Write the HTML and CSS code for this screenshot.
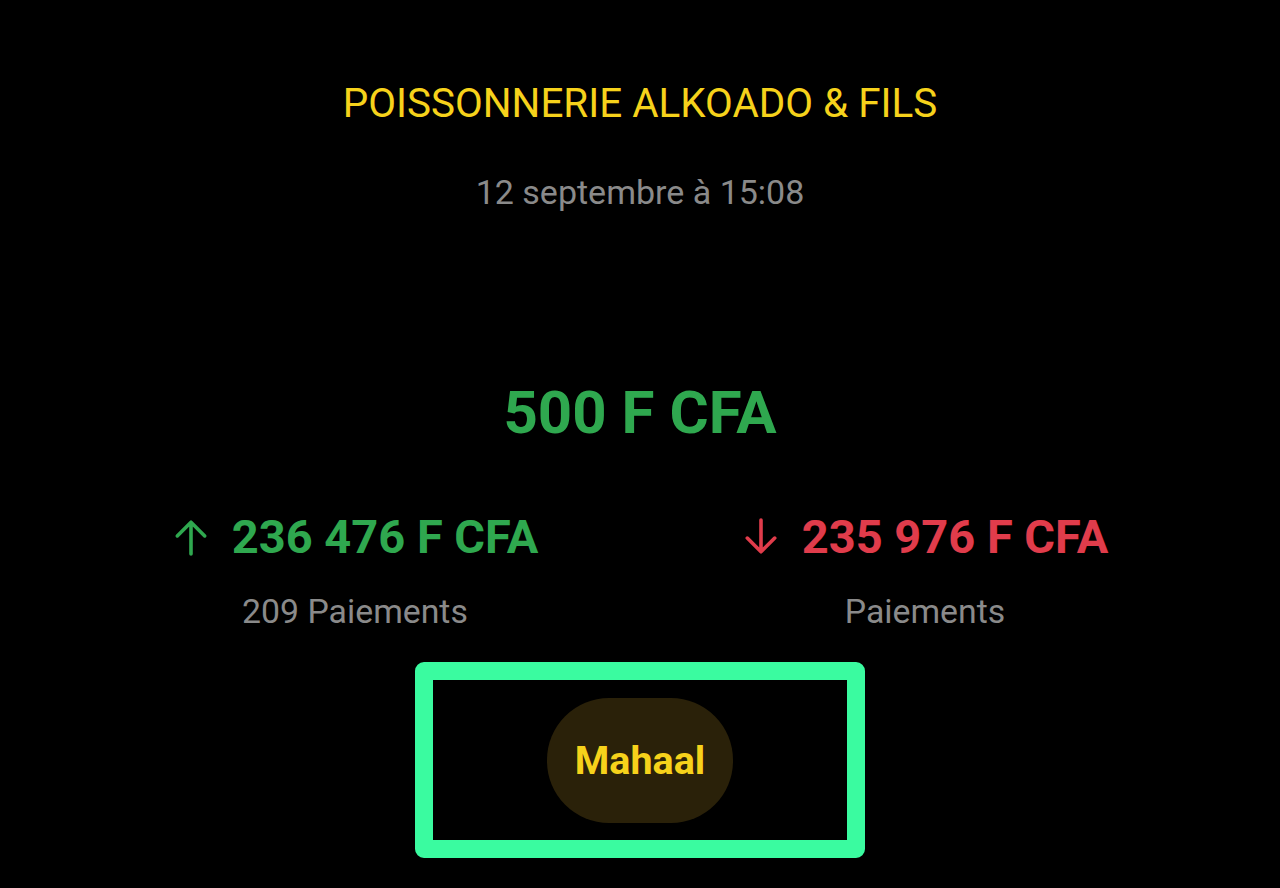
FILE: index.html
```html
<!DOCTYPE html>
<html lang="fr">
<head>
<meta charset="utf-8">
<link rel="stylesheet" href="styles.css">
</head>
<body>
<main class="screen">
  <h1 class="merchant">POISSONNERIE ALKOADO &amp; FILS</h1>
  <p class="date">12 septembre à 15:08</p>
  <p class="balance">500 F CFA</p>
  <div class="stats">
    <div class="stat">
      <div class="amount in">
        <svg class="arrow" viewBox="0 0 36 36" width="38" height="38"><path d="M18 34V4M5 17L18 4l13 13" fill="none" stroke="currentColor" stroke-width="3.4" stroke-linecap="round" stroke-linejoin="round"/></svg>
        <span>236 476 F CFA</span>
      </div>
      <div class="label">209 Paiements</div>
    </div>
    <div class="stat">
      <div class="amount out">
        <svg class="arrow" viewBox="0 0 36 36" width="38" height="38"><path d="M18 2v30M5 19l13 13 13-13" fill="none" stroke="currentColor" stroke-width="3.4" stroke-linecap="round" stroke-linejoin="round"/></svg>
        <span>235 976 F CFA</span>
      </div>
      <div class="label">Paiements</div>
    </div>
  </div>
  <div class="highlight">
    <div class="pill">Mahaal</div>
  </div>
</main>
</body>
</html>
```

FILE: styles.css
```css
html, body {
  margin: 0;
  padding: 0;
  background: #000;
}
body {
  font-family: Roboto, "Liberation Sans", sans-serif;
  width: 1280px;
  height: 888px;
  overflow: hidden;
}
.screen {
  display: flex;
  flex-direction: column;
  align-items: center;
  padding: 0 70px;
}
.merchant {
  margin: 80px 0 0;
  font-size: 40.4px;
  font-weight: 400;
  line-height: 48px;
  color: #f6d21b;
}
.date {
  margin: 44px 0 0;
  font-size: 34px;
  line-height: 40px;
  color: #8a8a8a;
}
.balance {
  margin: 169px 0 0;
  font-size: 60px;
  font-weight: 700;
  line-height: 64px;
  color: #2fa84f;
}
.stats {
  align-self: stretch;
  display: grid;
  grid-template-columns: 1fr 1fr;
  margin-top: 64px;
}
.stat {
  display: flex;
  flex-direction: column;
  align-items: center;
}
.amount {
  display: flex;
  align-items: center;
  gap: 22px;
  font-size: 47px;
  font-weight: 700;
  line-height: 56px;
}
.amount.in { color: #2fa84f; }
.amount.out { color: #e03c4b; }
.arrow { display: block; }
.label {
  margin-top: 27px;
  font-size: 33.8px;
  line-height: 40px;
  color: #8a8a8a;
}
.highlight {
  margin-top: 30px;
  width: 414px;
  height: 160px;
  border: 18px solid #3afba0;
  border-radius: 9px;
  display: flex;
  align-items: center;
  justify-content: center;
}
.pill {
  width: 186px;
  height: 125px;
  border-radius: 62px;
  background: #2a2109;
  color: #f6d21b;
  font-size: 39.5px;
  font-weight: 700;
  display: flex;
  align-items: center;
  justify-content: center;
}
```
